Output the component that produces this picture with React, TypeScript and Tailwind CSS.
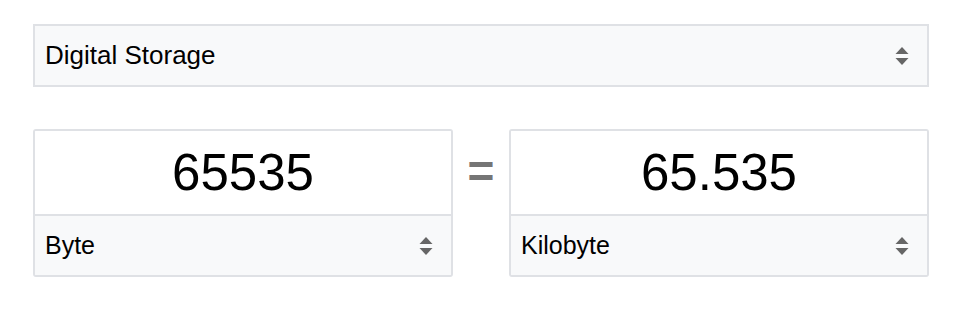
import React from "react";

function Arrows() {
  return (
    <svg width="14" height="20" viewBox="0 0 14 20" className="shrink-0">
      <path d="M7 1 L13.5 8 H0.5 Z" fill="#666" />
      <path d="M7 19 L13.5 12 H0.5 Z" fill="#666" />
    </svg>
  );
}

function UnitSelect({ label, bordered }: { label: string; bordered?: boolean }) {
  return (
    <div
      className={
        bordered
          ? "flex items-center justify-between bg-[#f8f9fa] pl-[10px] pr-[18px] h-[61px] border-t-2 border-[#dfe1e5]"
          : "flex items-center justify-between bg-[#f8f9fa] pl-[10px] pr-[18px] h-[59px]"
      }
    >
      <span className={bordered ? "text-[25px] text-black" : "text-[26px] text-black"}>{label}</span>
      <Arrows />
    </div>
  );
}

function Converter({ value, unit }: { value: string; unit: string }) {
  return (
    <div className="w-[420px] border-2 border-[#dfe1e5] rounded-[3px] overflow-hidden">
      <div className="h-[83px] flex items-center justify-center bg-white">
        <span className="text-[51px] text-black leading-none">{value}</span>
      </div>
      <UnitSelect label={unit} bordered />
    </div>
  );
}

export default function App() {
  return (
    <div
      className="w-[966px] h-[316px] bg-white pt-[24px] pl-[33px]"
      style={{ fontFamily: '"Liberation Sans", Arial, sans-serif' }}
    >
      <div className="w-[896px] border-2 border-[#dfe1e5]">
        <UnitSelect label="Digital Storage" />
      </div>
      <div className="flex items-start mt-[42px] w-[896px]">
        <Converter value="65535" unit="Byte" />
        <div className="w-[56px] h-[84px] flex items-center justify-center">
          <span className="text-[46px] text-[#757575] leading-none font-bold">=</span>
        </div>
        <Converter value="65.535" unit="Kilobyte" />
      </div>
    </div>
  );
}
